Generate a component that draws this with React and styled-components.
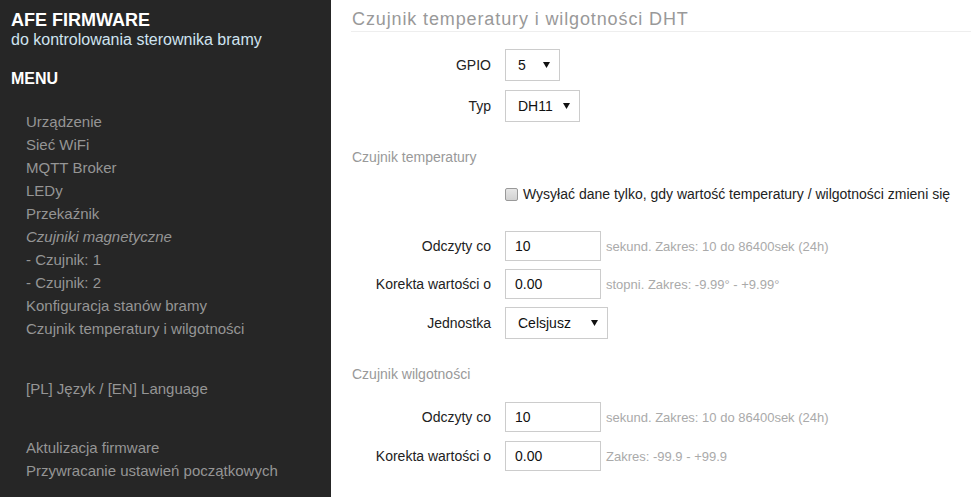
import React from "react";
import styled, { createGlobalStyle } from "styled-components";

const GlobalStyle = createGlobalStyle`
  body {
    margin: 0;
    font-family: "Liberation Sans", Arial, sans-serif;
    background: #fff;
  }
`;

const menuTop = [
  { label: "Urządzenie" },
  { label: "Sieć WiFi" },
  { label: "MQTT Broker" },
  { label: "LEDy" },
  { label: "Przekaźnik" },
  { label: "Czujniki magnetyczne", italic: true },
  { label: "- Czujnik: 1" },
  { label: "- Czujnik: 2" },
  { label: "Konfiguracja stanów bramy" },
  { label: "Czujnik temperatury i wilgotności" },
];

const Select = ({ value, width }) => (
  <SelectBox $width={width}>
    <span>{value}</span>
    <Arrow viewBox="0 0 7 6">
      <path d="M0 0h7L3.5 6z" fill="#111" />
    </Arrow>
  </SelectBox>
);

const Row = ({ label, children }) => (
  <FormRow>
    <Label>{label}</Label>
    {children}
  </FormRow>
);

export default function App() {
  return (
    <>
      <GlobalStyle />
      <Page>
        <Sidebar>
          <Brand>AFE FIRMWARE</Brand>
          <Subtitle>do kontrolowania sterownika bramy</Subtitle>
          <MenuTitle>MENU</MenuTitle>
          <MenuList $gap={22}>
            {menuTop.map((m) => (
              <MenuItem key={m.label} $italic={m.italic}>
                {m.label}
              </MenuItem>
            ))}
          </MenuList>
          <MenuList $gap={37}>
            <MenuItem>[PL] Język / [EN] Language</MenuItem>
          </MenuList>
          <MenuList $gap={36}>
            <MenuItem>Aktulizacja firmware</MenuItem>
            <MenuItem>Przywracanie ustawień początkowych</MenuItem>
          </MenuList>
        </Sidebar>
        <Main>
          <Title>Czujnik temperatury i wilgotności DHT</Title>
          <Fields $top={17} $gap={9}>
            <Row label="GPIO">
              <Select value="5" width={55} />
            </Row>
            <Row label="Typ">
              <Select value="DH11" width={75} />
            </Row>
          </Fields>

          <SectionTitle $top={27}>Czujnik temperatury</SectionTitle>
          <CheckRow>
            <CheckBox />
            <span>
              Wysyłać dane tylko, gdy wartość temperatury / wilgotności zmieni
              się
            </span>
          </CheckRow>
          <Fields $top={29}>
            <Row label="Odczyty co">
              <Input>10</Input>
              <Hint>sekund. Zakres: 10 do 86400sek (24h)</Hint>
            </Row>
            <Row label="Korekta wartości o">
              <Input>0.00</Input>
              <Hint>stopni. Zakres: -9.99° - +9.99°</Hint>
            </Row>
            <Row label="Jednostka">
              <Select value="Celsjusz" width={103} />
            </Row>
          </Fields>

          <SectionTitle $top={27}>Czujnik wilgotności</SectionTitle>
          <Fields $top={20} $gap={9}>
            <Row label="Odczyty co">
              <Input>10</Input>
              <Hint>sekund. Zakres: 10 do 86400sek (24h)</Hint>
            </Row>
            <Row label="Korekta wartości o">
              <Input>0.00</Input>
              <Hint>Zakres: -99.9 - +99.9</Hint>
            </Row>
          </Fields>
        </Main>
      </Page>
    </>
  );
}

const Page = styled.div`
  display: flex;
  min-height: 100vh;
`;

const Sidebar = styled.nav`
  width: 331px;
  flex-shrink: 0;
  background: #262626;
  padding: 10px 11px 20px;
  box-sizing: border-box;
  display: flex;
  flex-direction: column;
`;

const Brand = styled.div`
  color: #fff;
  font-weight: bold;
  font-size: 18px;
  line-height: 20px;
`;

const Subtitle = styled.div`
  color: #cfe3f0;
  font-size: 16px;
  line-height: 20px;
`;

const MenuTitle = styled.div`
  color: #fff;
  font-weight: bold;
  font-size: 16px;
  margin-top: 20px;
  line-height: 18px;
`;

const MenuList = styled.ul`
  list-style: none;
  margin: ${(p) => p.$gap}px 0 0;
  padding: 0 0 0 15px;
`;

const MenuItem = styled.li`
  color: #959595;
  font-size: 15px;
  line-height: 23px;
  font-style: ${(p) => (p.$italic ? "italic" : "normal")};
`;

const Main = styled.main`
  flex: 1;
  padding: 8px 0 0 20px;
  color: #222;
`;

const Title = styled.h1`
  margin: 0;
  font-weight: normal;
  font-size: 18px;
  letter-spacing: 0.88px;
  color: #999;
  line-height: 22px;
  padding: 0 0 1px 1px;
  border-bottom: 1px solid #eee;
`;

const Fields = styled.div`
  display: flex;
  flex-direction: column;
  gap: ${(p) => p.$gap ?? 8}px;
  margin-top: ${(p) => p.$top}px;
`;

const FormRow = styled.div`
  display: flex;
  align-items: center;
  font-size: 14px;
`;

const Label = styled.label`
  width: 140px;
  text-align: right;
  margin-right: 14px;
  color: #222;
`;

const SelectBox = styled.div`
  position: relative;
  width: ${(p) => p.$width}px;
  height: 32px;
  box-sizing: border-box;
  border: 1px solid #ccc;
  display: flex;
  align-items: center;
  padding-left: 12px;
  color: #111;
`;

const Arrow = styled.svg`
  position: absolute;
  right: 9px;
  top: 12px;
  width: 7px;
  height: 6px;
`;

const Input = styled.div`
  width: 96px;
  height: 30px;
  box-sizing: border-box;
  border: 1px solid #ccc;
  padding-left: 9px;
  display: flex;
  align-items: center;
  color: #111;
`;

const Hint = styled.span`
  margin-left: 5px;
  font-size: 13px;
  color: #aaa;
`;

const SectionTitle = styled.div`
  margin-top: ${(p) => p.$top}px;
  font-size: 14px;
  color: #999;
  padding-left: 1px;
`;

const CheckRow = styled.div`
  display: flex;
  align-items: center;
  margin: 21px 0 0 154px;
  font-size: 14px;
  color: #222;
  white-space: nowrap;
`;

const CheckBox = styled.span`
  width: 11px;
  height: 11px;
  flex-shrink: 0;
  border: 1px solid #999;
  border-radius: 2px;
  background: linear-gradient(#e6e6e6, #d2d2d2);
  margin-right: 5px;
`;
